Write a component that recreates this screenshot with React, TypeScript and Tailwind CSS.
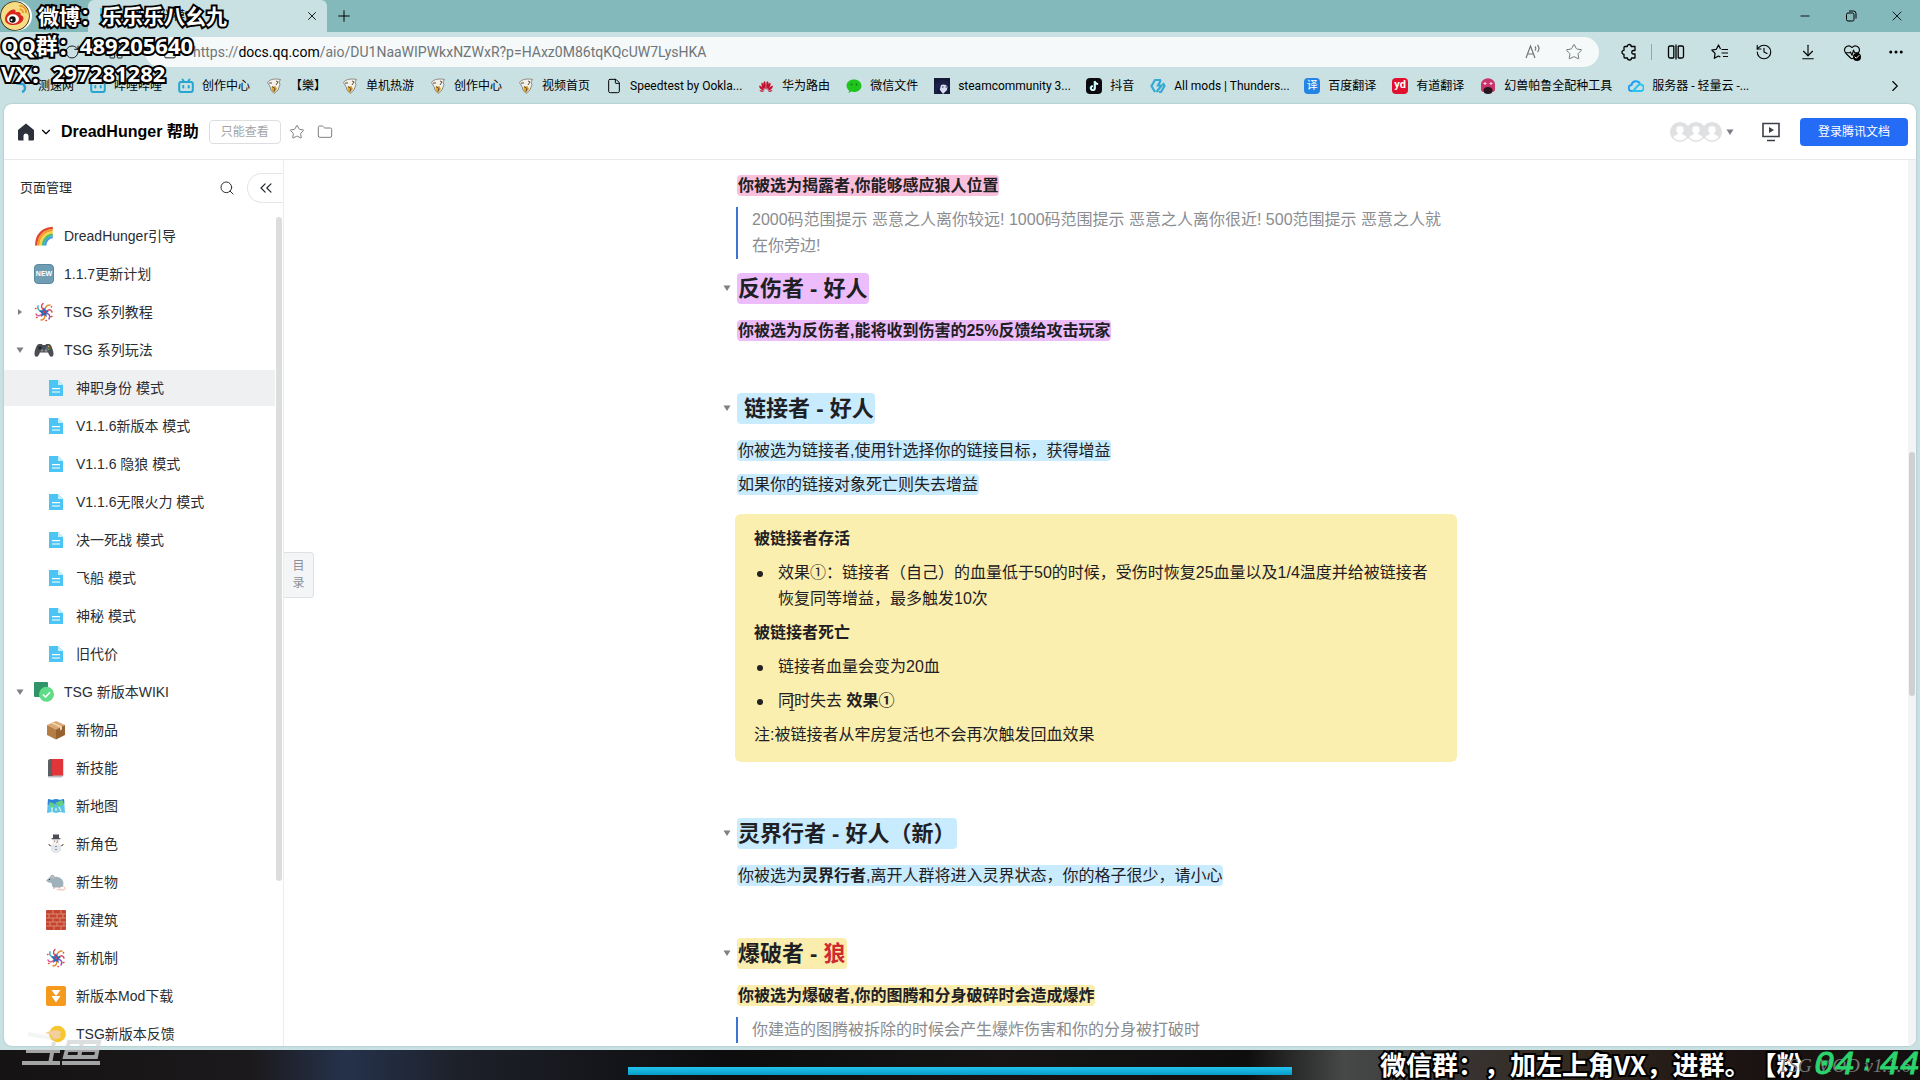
import type { ReactNode } from 'react';
import {
  ArrowDownToLine,
  Check,
  ChevronDown,
  ChevronRight,
  ChevronsLeft,
  Ellipsis,
  File,
  Folder,
  HeartPulse,
  History,
  LayoutGrid,
  Lock,
  Minus,
  Plus,
  RotateCw,
  Search,
  Star,
  X,
} from 'lucide-react';

interface Bookmark {
  label: string;
  icon: ReactNode;
  width?: string;
}

interface TreeItem {
  label: string;
  icon: ReactNode;
  child?: boolean;
  arrow?: 'open' | 'closed';
  active?: boolean;
}

const BiliIcon = () => (
  <svg viewBox="0 0 16 16" className="w-4 h-4" fill="none" stroke="#25a5cf" strokeWidth="2" strokeLinecap="round">
    <rect x="1.2" y="4" width="13.6" height="10" rx="2" />
    <path d="M4.5 1.5 6 3.5M11.5 1.5 10 3.5M5.3 8v1.6M10.7 8v1.6" />
  </svg>
);

const BirdIcon = () => (
  <svg viewBox="0 0 16 16" className="w-4 h-4">
    <path d="M1.500 4.500C4 1 9 .5 14.500 1.500L13 4l1 2.500-2 5.500-4 3.500L5 12l-1-3.500z" fill="#f4f1ea" stroke="#77716a" strokeWidth=".8" />
    <path d="m5.500 9 4-1 1.500 3-3 4-2.500-3z" fill="#e0a32c" />
    <path d="m6 8.500 3 2-1 3M10 3l2 1-2 3M3 5h3" fill="none" stroke="#5a4d3d" strokeWidth="1" />
  </svg>
);

const SpeedIcon = () => (
  <svg viewBox="0 0 16 16" className="w-4 h-4" fill="none" stroke="#2d9fd4" strokeWidth="2.4">
    <path d="M1 4c4 4 7 0 9 3s1 6-2 7M6 3c3-1 6-1 9 1" />
  </svg>
);

const HuaweiIcon = () => (
  <svg viewBox="0 0 16 16" className="w-4 h-4" fill="#c4102f">
    <path d="M7.6 11.5C5 8 4.500 4 6.800 3.200c1 .8 1.200 4 .8 8.300zM8.400 11.500C11 8 11.500 4 9.200 3.200c-1 .8-1.200 4-.8 8.300zM6.800 12C4.500 10 2.500 7 3.800 4.500 5.500 5.500 6.300 8.500 6.800 12zM9.200 12c2.300-2 4.300-5 3-7.500-1.700 1-2.500 4-3 7.500zM6.300 12.600C3.500 12 1 10.500 1.200 7.600c2.300.6 4 2.400 5.100 5zM9.700 12.600c2.800-.6 5.300-2.100 5.100-5-2.300.6-4 2.400-5.100 5zM6 13.200c-1.800.9-3.700.8-4.500-.9 1.500-.4 3-.1 4.500.9zM10 13.200c1.800.9 3.700.8 4.500-.9-1.500-.4-3-.1-4.500.9z" />
  </svg>
);

const WechatIcon = () => (
  <svg viewBox="0 0 16 16" className="w-4 h-4">
    <path d="M8 1.500c4.200 0 7.500 2.700 7.500 6.200S12.200 14 8 14c-1 0-2-.2-2.800-.4L2.500 15l.6-2.600C1.500 11.200.5 9.600.5 7.700.5 4.200 3.800 1.500 8 1.500z" fill="#1fc41f" />
    <circle cx="5.500" cy="6.500" r="1" fill="#0e7d14" />
    <circle cx="10.500" cy="6.500" r="1" fill="#0e7d14" />
  </svg>
);

const SteamIcon = () => (
  <svg viewBox="0 0 16 16" className="w-4 h-4">
    <rect width="16" height="16" fill="#15193a" />
    <path d="M5 5c3-3 8-2 9 1l-1 6-4 4-3-4z" fill="#d8dcf0" />
    <path d="M1 8c2-6 9-8 14-3l-1 4c-2-3-5-3-7-2l-1 4-2-2-1 6H1z" fill="#1b2147" />
    <path d="M8 9h1.500M11.500 9H13" stroke="#1b2147" strokeWidth="1.200" />
  </svg>
);

const TiktokIcon = () => (
  <svg viewBox="0 0 16 16" className="w-4 h-4">
    <rect width="16" height="16" rx="4" fill="#0b0b0f" />
    <path d="M8.500 3v7a2 2 0 1 1-2-2M8.500 3c.3 1.700 1.500 2.700 3.200 2.800" fill="none" stroke="#34dbe0" strokeWidth="1.800" />
    <path d="M9 3.300v7a2 2 0 1 1-2-2M9 3.300C9.300 5 10.500 6 12.200 6.100" fill="none" stroke="#fff" strokeWidth="1.500" />
  </svg>
);

const ThunderIcon = () => (
  <svg viewBox="0 0 16 16" className="w-4 h-4" fill="none" stroke="#35a9d6" strokeWidth="2.200">
    <path d="M11 2H5L1.500 8 5 14M11 2 8 7.500h3.500L6.500 14M13 5l1.500 3L11 14H9" />
  </svg>
);

const MonsterIcon = () => (
  <svg viewBox="0 0 16 16" className="w-4 h-4">
    <path d="M1 6a6 5 0 0 1 14 0v5a3 3 0 0 1-3 3H4a3 3 0 0 1-3-3z" fill="#c9356a" />
    <ellipse cx="8" cy="12.500" rx="4.500" ry="3.500" fill="#26151d" />
    <path d="M3.500 5.500h3M5 4v3M9.500 5.500h3M11 4v3" stroke="#ffd5e6" strokeWidth="1" />
  </svg>
);

const CloudIcon = () => (
  <svg viewBox="0 0 16 16" className="w-4 h-4" fill="none" strokeWidth="2">
    <path d="M6 13H4a3 3 0 0 1-.5-6A4.600 4.600 0 0 1 12 5.500" stroke="#1f9df5" />
    <path d="m5 13 5-5.500a3.300 3.300 0 1 1 2 5.500z" stroke="#29c3ee" />
  </svg>
);

const bookmarks: Bookmark[] = [
  { label: '测速网', icon: <SpeedIcon /> },
  { label: '哔哩哔哩', icon: <BiliIcon /> },
  { label: '创作中心', icon: <BiliIcon /> },
  { label: '【樂】', icon: <BirdIcon /> },
  { label: '单机热游', icon: <BirdIcon /> },
  { label: '创作中心', icon: <BirdIcon /> },
  { label: '视频首页', icon: <BirdIcon /> },
  { label: 'Speedtest by Ookla...', icon: <File className="w-4 h-4" strokeWidth={1.5} />, width: 'w-28' },
  { label: '华为路由', icon: <HuaweiIcon /> },
  { label: '微信文件', icon: <WechatIcon /> },
  { label: 'steamcommunity 3...', icon: <SteamIcon />, width: 'w-28' },
  { label: '抖音', icon: <TiktokIcon /> },
  { label: 'All mods | Thunders...', icon: <ThunderIcon />, width: 'w-[114px]' },
  {
    label: '百度翻译',
    icon: <span className="w-4 h-4 rounded-sm bg-[#2484e6] text-white text-[11px] leading-4 text-center">译</span>,
  },
  {
    label: '有道翻译',
    icon: <span className="w-4 h-4 rounded-sm bg-[#e0102e] text-white text-[11px] leading-[14px] font-bold text-center">yd</span>,
  },
  { label: '幻兽帕鲁全配种工具', icon: <MonsterIcon /> },
  { label: '服务器 - 轻量云 -...', icon: <CloudIcon /> },
];

const Rainbow = () => (
  <svg viewBox="0 0 20 20" className="w-5 h-5" fill="none" strokeWidth="2.400">
    <path d="M2.200 19.500C2.200 9 9 2.200 18.800 2" stroke="#e0452f" />
    <path d="M4.500 19.500C4.500 10.500 10.500 4.500 18.800 4.300" stroke="#f59a2b" />
    <path d="M6.800 19.500C6.800 12 12 6.800 18.800 6.600" stroke="#f7d548" />
    <path d="M9 19.500C9 13.500 13.500 9 18.800 8.800" stroke="#4fbb6b" />
    <path d="M11.200 19.500c0-4.700 3.300-8.200 7.600-8.400" stroke="#3b9be8" />
  </svg>
);

const NewBadge = () => (
  <span className="w-5 h-5 rounded-sm border border-[#5b8aa0] bg-[#6f9db3] text-white text-[7px] leading-[18px] font-bold text-center">
    NEW
  </span>
);

const Pinwheel = () => (
  <svg viewBox="0 0 20 20" className="w-5 h-5" fill="none" strokeWidth="1.500" strokeLinecap="round">
    <path d="M10 8C8 7 6 4 9 1.500" stroke="#d84a5b" />
    <path d="M11 9c0-4 2-6 5-6" stroke="#e58a2f" />
    <path d="M12 10c2-3 5-3 6 0" stroke="#d84a5b" />
    <path d="M11 11c4 0 6 3 4 6" stroke="#8e55c9" />
    <path d="M10 12c2 3 0 6-3 6" stroke="#e58a2f" />
    <path d="M9 11c-2 3-6 4-7 1" stroke="#e0609a" />
    <path d="M8 9C5 9 3 7 4 4" stroke="#3aa9c9" />
    <path d="m10 5 1.400 3.200L15 9l-2.800 2.400L13 15l-3-2-3 2 .8-3.600L5 9l3.600-.8z" fill="#3067b5" stroke="none" />
    <circle cx="10" cy="10" r="1.300" fill="#cf4050" stroke="none" />
    <path d="M17.500 4.500v.5M2.500 15.500h.5M17 14.500h1M1.500 6.500H2M12 18.500h.5" stroke="#e0503f" />
  </svg>
);

const Gamepad = () => (
  <svg viewBox="0 0 20 20" className="w-5 h-5">
    <path d="M5 4h3l.5 1h3L12 4h3c2 0 4 5 4.500 9 .3 4-2.500 5-4 2.500L14 12.500H6l-1.500 3C3 18 .2 17 .5 13 1 9 3 4 5 4z" fill="#4b4f54" />
    <circle cx="6" cy="8" r="1.800" fill="#23272b" />
    <circle cx="12" cy="10.500" r="1.500" fill="#85898d" />
    <circle cx="8" cy="10.500" r="1.300" fill="#85898d" />
    <circle cx="14.500" cy="6.500" r=".8" fill="#e8c63b" />
    <circle cx="16" cy="8" r=".8" fill="#e0483f" />
    <circle cx="14.500" cy="9.300" r=".8" fill="#52b558" />
    <circle cx="13" cy="8" r=".8" fill="#4a8fe0" />
  </svg>
);

const DocIcon = () => (
  <svg viewBox="0 0 14 16" className="w-[14px] h-4">
    <path d="M0 0h9l5 5v11H0z" fill="#4cc5f4" />
    <path d="M9 0v5h5z" fill="#c4effd" />
    <path d="M3 8.700h8M3 12h8" stroke="#fff" strokeWidth="1.200" />
  </svg>
);

const WikiIcon = () => (
  <svg viewBox="0 0 20 20" className="w-5 h-5">
    <rect width="14" height="15" rx="1" fill="#2f9468" />
    <circle cx="12.500" cy="12.300" r="7.500" fill="#5fdc86" />
    <path d="m9 12.500 2.500 2.500 4.500-4.700" fill="none" stroke="#fff" strokeWidth="1.600" />
  </svg>
);

const PackageBox = () => (
  <svg viewBox="0 0 20 20" className="w-5 h-5">
    <path d="m10 1 9 4-9 4.500L1 5z" fill="#d9a873" />
    <path d="M1 5v10l9 4.500v-10z" fill="#b57c45" />
    <path d="M19 5v10l-9 4.500v-10z" fill="#96602f" />
    <path d="m5 3.200 9 4.300v3l2-1V6.500L7 2.300z" fill="#eed3ad" />
  </svg>
);

const RedBook = () => (
  <svg viewBox="0 0 20 20" className="w-5 h-5">
    <path d="M3 1h14.500v17L15 19.500H2V2z" fill="#b9bdc1" />
    <path d="M2 2.500 4 1h3v17H2z" fill="#5d5f63" />
    <path d="M6 1h11v16.500H6z" fill="#e2353a" />
  </svg>
);

const MapIcon = () => (
  <svg viewBox="0 0 20 20" className="w-5 h-5">
    <path d="m2 3 4 1 4-1 4 1 4-1 1 14-5-1-4 1-4-1-5 1z" fill="#58c4ee" />
    <path d="m2 3 4 1 4-1 4 1 4-1 .3 4-7 2-5-2-4.600 2z" fill="#2f83d6" />
    <path d="m3 6 4 1 2 4-4 1zM9 7l7-3 2 4-5 3z" fill="#66cf7d" />
    <path d="M5 12h2M6 12v4M10 12v3M13 11l2 4" stroke="#e6f7d0" strokeWidth="1.200" />
  </svg>
);

const Snowman = () => (
  <svg viewBox="0 0 20 20" className="w-5 h-5">
    <path d="m3 11 4 2M17 11l-4 2M2.500 10l1 1M17.500 10l-1 1" stroke="#66564b" strokeWidth="1" />
    <circle cx="10" cy="14" r="5.300" fill="#e4e7ec" />
    <circle cx="10" cy="7.500" r="3.800" fill="#eef0f4" />
    <path d="M7 4V.5h6V4h1.300v1.200H5.700V4z" fill="#4b4d52" />
    <circle cx="8.700" cy="7" r=".5" fill="#333" />
    <circle cx="11.300" cy="7" r=".5" fill="#333" />
    <path d="m10 8 2.500.5L10 9z" fill="#e5793f" />
    <path d="M10 12v1M10 15v1" stroke="#444" />
  </svg>
);

const MouseIcon = () => (
  <svg viewBox="0 0 20 20" className="w-5 h-5">
    <path d="M16 14c4 1 4 4 1 4s-4-.5-6-.5" fill="none" stroke="#f0b49a" strokeWidth="1" />
    <path d="M0 8.500 4 5c1-3 4-3 4.500 0 4-1 9 2 9 6.500 0 3-2 4-4 4H7c-1-1-1-3-1.500-4.500C3.500 11 1 10 0 8.500z" fill="#9fb2bc" />
    <circle cx="7" cy="5" r="1.700" fill="#c9b6b8" />
    <circle cx="3.500" cy="7.500" r=".6" fill="#222" />
    <path d="M8 15v2M13 15l1 1.500" stroke="#e8a88f" strokeWidth="1.200" />
  </svg>
);

const BricksIcon = () => (
  <svg viewBox="0 0 20 20" className="w-5 h-5">
    <rect width="20" height="20" rx="1" fill="#c4442f" />
    <path d="M0 4h20M0 8h20M0 12h20M0 16h20M7 0v4M15 0v4M3 4v4M11 4v4M17 4v4M7 8v4M14 8v4M4 12v4M11 12v4M18 12v4M8 16v4M15 16v4" stroke="#e39a82" strokeWidth=".8" />
  </svg>
);

const DownloadIcon = () => (
  <svg viewBox="0 0 20 20" className="w-5 h-5">
    <rect width="20" height="20" rx="2" fill="#f59a1c" />
    <path d="M5.500 4h9L10 10zM5.500 10h9L10 16.500z" fill="#fff" />
  </svg>
);

const FeedbackIcon = () => (
  <svg viewBox="0 0 20 20" className="w-5 h-5">
    <circle cx="11.500" cy="10" r="8.300" fill="#f6c62c" />
    <path d="M0 8.500 8 6l6 1c2 1 1 3-1 3l2 2c-1 3-5 4-8 2L4 10 0 9.500z" fill="#f3cf9d" />
  </svg>
);

const treeItems: TreeItem[] = [
  { label: 'DreadHunger引导', icon: <Rainbow /> },
  { label: '1.1.7更新计划', icon: <NewBadge /> },
  { label: 'TSG 系列教程', icon: <Pinwheel />, arrow: 'closed' },
  { label: 'TSG 系列玩法', icon: <Gamepad />, arrow: 'open' },
  { label: '神职身份 模式', icon: <DocIcon />, child: true, active: true },
  { label: 'V1.1.6新版本 模式', icon: <DocIcon />, child: true },
  { label: 'V1.1.6 隐狼 模式', icon: <DocIcon />, child: true },
  { label: 'V1.1.6无限火力 模式', icon: <DocIcon />, child: true },
  { label: '决一死战 模式', icon: <DocIcon />, child: true },
  { label: '飞船 模式', icon: <DocIcon />, child: true },
  { label: '神秘 模式', icon: <DocIcon />, child: true },
  { label: '旧代价', icon: <DocIcon />, child: true },
  { label: 'TSG 新版本WIKI', icon: <WikiIcon />, arrow: 'open' },
  { label: '新物品', icon: <PackageBox />, child: true },
  { label: '新技能', icon: <RedBook />, child: true },
  { label: '新地图', icon: <MapIcon />, child: true },
  { label: '新角色', icon: <Snowman />, child: true },
  { label: '新生物', icon: <MouseIcon />, child: true },
  { label: '新建筑', icon: <BricksIcon />, child: true },
  { label: '新机制', icon: <Pinwheel />, child: true },
  { label: '新版本Mod下载', icon: <DownloadIcon />, child: true },
  { label: 'TSG新版本反馈', icon: <FeedbackIcon />, child: true },
];

function Caret({ closed = false }: { closed?: boolean }) {
  return (
    <svg viewBox="0 0 8 8" className="w-2 h-2 shrink-0" fill="#7d8085">
      <path d={closed ? 'M2 1v6l4-3z' : 'M.5 1.500h7L4 7z'} />
    </svg>
  );
}

function ToolButton({ label, children }: { label: string; children: ReactNode }) {
  return (
    <button aria-label={label} className="w-11 h-8 flex items-center justify-center shrink-0">
      {children}
    </button>
  );
}

function BrowserChrome() {
  return (
    <header className="font-['Roboto','Noto_Sans_CJK_SC',sans-serif] text-black shrink-0">
      <div className="h-8 bg-[#84b9bc] flex items-stretch">
        <div className="w-[88px] shrink-0" />
        <div className="w-[239px] bg-[#c9e1e3] rounded-t-md flex items-center gap-2 pl-3 pr-2">
          <DocIcon />
          <span className="flex-1 text-xs truncate">神职身份 模式</span>
          <button aria-label="关闭标签页">
            <X className="w-[14px] h-[14px]" strokeWidth={1.5} />
          </button>
        </div>
        <button aria-label="新建标签页" className="w-[34px] flex items-center justify-center">
          <Plus className="w-[18px] h-[18px]" strokeWidth={1.3} />
        </button>
        <div className="flex-1" />
        <button aria-label="最小化" className="w-[46px] flex items-center justify-center">
          <Minus className="w-[14px] h-[14px]" strokeWidth={1.5} />
        </button>
        <button aria-label="还原" className="w-[46px] flex items-center justify-center">
          <svg viewBox="0 0 12 12" className="w-3 h-3" fill="none" stroke="currentColor">
            <rect x="1.500" y="3" width="7.500" height="8" rx="1.500" />
            <path d="M4 1h4.500A2.500 2.500 0 0 1 11 3.500V8.500" />
          </svg>
        </button>
        <button aria-label="关闭" className="w-[46px] flex items-center justify-center">
          <X className="w-4 h-4" strokeWidth={1.3} />
        </button>
      </div>

      <div className="h-10 flex items-center pr-[2px]">
        <div className="w-[145px] flex items-center shrink-0 pl-16 gap-7">
          <RotateCw className="w-4 h-4" strokeWidth={1.3} />
          <LayoutGrid className="w-4 h-4" strokeWidth={1.3} />
        </div>
        <div className="flex-1 h-[30px] rounded-full bg-[#f5f9fa] flex items-center pl-[18px] pr-3">
          <Lock className="w-[14px] h-[14px] shrink-0 mr-4" strokeWidth={1.5} />
          <div className="flex-1 text-sm text-[#707577] whitespace-nowrap">
            https://<span className="text-black">docs.qq.com</span>/aio/DU1NaaWIPWkxNZWxR?p=HAxz0M86tqKQcUW7LysHKA
          </div>
          <button aria-label="大声朗读" className="w-10 flex justify-center text-[#707577]">
            <svg viewBox="0 0 18 18" className="w-[18px] h-[18px]" fill="none" stroke="currentColor" strokeWidth="1.200">
              <path d="m2 15 4.500-12L11 15M3.500 11h6M11 3.500c1 1 1 3 0 4M13.500 2c1.700 2 1.700 5 0 7" />
            </svg>
          </button>
          <button aria-label="收藏此页" className="w-[26px] ml-2 flex justify-center text-[#707577]">
            <Star className="w-[18px] h-[18px]" strokeWidth={1.3} />
          </button>
        </div>
        <div className="w-2" />
        <ToolButton label="扩展">
          <svg viewBox="0 0 18 18" className="w-[18px] h-[18px]" fill="none" stroke="currentColor" strokeWidth="1.300" strokeLinejoin="round">
            <path d="M5 3.500h2.200a2 2 0 0 1 4 0H15v4h-1.500a1.700 1.700 0 0 0 0 3.500H15v4h-3.500a2 2 0 0 1-4 0H5a1 1 0 0 1-1-1v-2.700a2 2 0 0 1 0-4V4.500a1 1 0 0 1 1-1z" />
          </svg>
        </ToolButton>
        <div className="w-px h-4 mr-[2px] bg-[#93a7a9]" />
        <ToolButton label="分屏">
          <svg viewBox="0 0 18 18" className="w-[18px] h-[18px]" fill="none" stroke="currentColor" strokeWidth="1.300">
            <path d="M6.800 3H3a1.500 1.500 0 0 0-1.500 1.500v9A1.500 1.500 0 0 0 3 15h3.800M11.200 3H15a1.500 1.500 0 0 1 1.500 1.500v9A1.500 1.500 0 0 1 15 15h-3.800M9 1.500v15M6.800 3v12M11.200 3v12" />
          </svg>
        </ToolButton>
        <ToolButton label="收藏夹">
          <svg viewBox="0 0 18 18" className="w-[18px] h-[18px]" fill="none" stroke="currentColor" strokeWidth="1.200" strokeLinejoin="round">
            <path d="M9.500 6 7.500 2 5.300 6.300.8 7l3.300 3.300-.8 5 4.200-2.300 1.800 1M10.500 6.500H17M10.500 10H17M12 13.500h5" />
          </svg>
        </ToolButton>
        <ToolButton label="历史记录">
          <History className="w-[18px] h-[18px]" strokeWidth={1.5} />
        </ToolButton>
        <ToolButton label="下载">
          <ArrowDownToLine className="w-[18px] h-[18px]" strokeWidth={1.5} />
        </ToolButton>
        <ToolButton label="浏览器概要">
          <span className="relative block">
            <HeartPulse className="w-[18px] h-[18px]" strokeWidth={1.5} />
            <span className="absolute right-0 bottom-0 w-2 h-2 rounded-full bg-black text-white flex items-center justify-center">
              <Check className="w-[6px] h-[6px]" strokeWidth={4} />
            </span>
          </span>
        </ToolButton>
        <ToolButton label="设置及其他">
          <Ellipsis className="w-[18px] h-[18px]" strokeWidth={2} />
        </ToolButton>
      </div>

      <nav className="h-8 flex items-center gap-4 pl-[14px] pr-4 pb-1 text-xs whitespace-nowrap">
        {bookmarks.map((b, i) => (
          <a key={i} href="#" className="flex items-center gap-2 shrink-0">
            {b.icon}
            <span className={b.width}>{b.label}</span>
          </a>
        ))}
        <button aria-label="更多书签" className="ml-auto">
          <ChevronRight className="w-[18px] h-[18px]" strokeWidth={1.5} />
        </button>
      </nav>
    </header>
  );
}

function DocHeader() {
  return (
    <div className="h-14 shrink-0 border-b border-[#e8e9eb] flex items-center pl-[13px] pr-2">
      <button aria-label="首页" className="flex items-center gap-1">
        <svg viewBox="0 0 18 18" className="w-[18px] h-[18px]" fill="#2b303a">
          <path d="M9 .5 17 7v9.500a1 1 0 0 1-1 1h-4.500V13a2.500 2.500 0 0 0-5 0v4.500H2a1 1 0 0 1-1-1V7z" />
        </svg>
        <ChevronDown className="w-[14px] h-[14px]" strokeWidth={2} />
      </button>
      <h1 className="ml-2 text-base font-bold text-black">DreadHunger 帮助</h1>
      <span className="ml-[10px] h-6 w-[72px] border border-[#dcdee0] rounded text-xs leading-[22px] text-center text-[#a3a6a9]">
        只能查看
      </span>
      <button aria-label="收藏" className="ml-2 text-[#7b7e82]">
        <Star className="w-4 h-4" strokeWidth={1.5} />
      </button>
      <button aria-label="移动到文件夹" className="ml-3 text-[#7b7e82]">
        <Folder className="w-4 h-4" strokeWidth={1.5} />
      </button>
      <div className="flex-1" />
      <div className="flex items-center">
        {[0, 1, 2].map((n) => (
          <svg key={n} viewBox="0 0 20 20" className="w-5 h-5 -mr-1">
            <circle cx="10" cy="10" r="10" fill="#dfe0e1" />
            <path d="M10 4c5 0 4 6 2 7.500 1 2 4 1.500 4.500 3.500a8 8 0 0 1-13 0C4 13 7 13.500 8 11.500 6 10 5 4 10 4z" fill="#fff" />
          </svg>
        ))}
        <span className="ml-2">
          <Caret />
        </span>
      </div>
      <button aria-label="演示" className="ml-7">
        <svg viewBox="0 0 18 20" className="w-[18px] h-5" fill="none" stroke="#3a3f48" strokeWidth="1.600">
          <path d="M1 1.500h16v13H1zM5 18.500h8" />
          <path d="M7 5v6l5-3z" fill="#3a3f48" stroke="none" />
        </svg>
      </button>
      <button className="ml-5 h-7 w-[108px] rounded bg-[#246bf6] text-white text-xs">登录腾讯文档</button>
    </div>
  );
}

function Sidebar() {
  return (
    <aside className="w-[280px] shrink-0 border-r border-[#ebecee] flex flex-col text-sm text-[#2a2d31]">
      <div className="h-14 shrink-0 flex items-center pl-4">
        <span className="text-[13px]">页面管理</span>
        <div className="flex-1" />
        <button aria-label="搜索" className="mr-3">
          <Search className="w-4 h-4" strokeWidth={1.5} />
        </button>
        <button
          aria-label="收起"
          className="w-9 h-[30px] border border-r-0 border-[#e3e5e7] rounded-l-full flex items-center justify-center"
        >
          <ChevronsLeft className="w-5 h-5" strokeWidth={1.5} />
        </button>
      </div>
      <div className="flex-1 min-h-0 flex">
        <ul className="flex-1 flex flex-col gap-[2px] pt-[2px] overflow-hidden">
          {treeItems.map((item) => (
            <li key={item.label} className="shrink-0">
              <a
                href="#"
                className={`h-9 flex items-center ${item.child ? 'pl-[42px]' : 'pl-3'} ${item.active ? 'bg-[#eff0f2]' : ''}`}
              >
                {!item.child && <span className="w-[18px]">{item.arrow && <Caret closed={item.arrow === 'closed'} />}</span>}
                <span className="w-5 flex justify-center shrink-0">{item.icon}</span>
                <span className="ml-[10px]">{item.label}</span>
              </a>
            </li>
          ))}
        </ul>
        <div className="w-2 shrink-0">
          <div className="w-[6px] h-[80%] mx-px mt-px rounded-full bg-[#dcdddd]" />
        </div>
      </div>
    </aside>
  );
}

function Mark({ color, children }: { color: string; children: ReactNode }) {
  return <mark className={`rounded px-px py-[2px] -ml-px text-inherit ${color}`}>{children}</mark>;
}

function Heading({ color, children }: { color: string; children: ReactNode }) {
  return (
    <h2 className="-ml-4 h-[34px] flex items-center text-[22px] font-bold whitespace-pre">
      <span className="w-4 pl-px flex">
        <Caret />
      </span>
      <span className={`-ml-px px-px py-[3px] leading-[25px] rounded ${color}`}>{children}</span>
    </h2>
  );
}

function Quote({ children }: { children: ReactNode }) {
  return <blockquote className="-ml-[2px] border-l-2 border-[#3c73d6] pl-[14px] text-[#8a8c8f]">{children}</blockquote>;
}

function Bullet({ children }: { children: ReactNode }) {
  return (
    <li className="flex">
      <span className="w-6 shrink-0 pl-[3px] pt-[11px]">
        <span className="block w-[6px] h-[6px] rounded-full bg-[#222]" />
      </span>
      <span>{children}</span>
    </li>
  );
}

function Article() {
  return (
    <article className="w-[716px] pt-[13px] text-base leading-[26px] text-[#1f2023]">
      <p className="font-bold">
        <Mark color="bg-[#f8c0dc]">你被选为揭露者,你能够感应狼人位置</Mark>
      </p>
      <div className="mt-2">
        <Quote>
          2000码范围提示 恶意之人离你较远! 1000码范围提示 恶意之人离你很近! 500范围提示 恶意之人就在你旁边!
        </Quote>
      </div>

      <div className="mt-3">
        <Heading color="bg-[#ecbdfa]">反伤者 - 好人</Heading>
      </div>
      <p className="mt-[13px] font-bold">
        <Mark color="bg-[#ecbdfa]">你被选为反伤者,能将收到伤害的25%反馈给攻击玩家</Mark>
      </p>

      <div className="mt-[47px]">
        <Heading color="bg-[#c8ebfd]"> 链接者 - 好人</Heading>
      </div>
      <p className="mt-[13px]">
        <Mark color="bg-[#c8ebfd]">你被选为链接者,使用针选择你的链接目标，获得增益</Mark>
      </p>
      <p className="mt-2">
        <Mark color="bg-[#c8ebfd]">如果你的链接对象死亡则失去增益</Mark>
      </p>

      <section className="mt-4 -mx-[3px] pl-[19px] pr-6 pt-3 pb-[14px] bg-[#faefae] rounded-md flex flex-col gap-2">
        <p className="font-bold">被链接者存活</p>
        <ul>
          <Bullet>
            效果①：链接者（自己）的血量低于50的时候，受伤时恢复25血量以及1/4温度并给被链接者恢复同等增益，最多触发10次
          </Bullet>
        </ul>
        <p className="font-bold">被链接者死亡</p>
        <ul className="flex flex-col gap-2">
          <Bullet>链接者血量会变为20血</Bullet>
          <Bullet>
            同时失去 <b>效果①</b>
          </Bullet>
        </ul>
        <p>注:被链接者从牢房复活也不会再次触发回血效果</p>
      </section>

      <div className="mt-[54px]">
        <Heading color="bg-[#c8ebfd]">灵界行者 - 好人（新）</Heading>
      </div>
      <p className="mt-[13px]">
        <Mark color="bg-[#c8ebfd]">
          你被选为<b>灵界行者</b>,离开人群将进入灵界状态，你的格子很少，请小心
        </Mark>
      </p>

      <div className="mt-[47px]">
        <Heading color="bg-[#faedae]">
          爆破者 - <span className="text-[#cf2a30]">狼</span>
        </Heading>
      </div>
      <p className="mt-[13px] font-bold">
        <Mark color="bg-[#faedae]">你被选为爆破者,你的图腾和分身破碎时会造成爆炸</Mark>
      </p>
      <div className="mt-2">
        <Quote>你建造的图腾被拆除的时候会产生爆炸伤害和你的分身被打破时</Quote>
      </div>
    </article>
  );
}

const outline = '[-webkit-text-stroke:4px_#000] [paint-order:stroke_fill]';

function StreamOverlay() {
  return (
    <div className={`absolute left-0 top-0 text-[22px] leading-7 font-bold text-white whitespace-nowrap font-['Noto_Sans','Noto_Sans_CJK_SC',sans-serif] ${outline}`}>
      <div className="h-[31px] flex items-center text-[21px]">
        <svg viewBox="0 0 32 32" className="w-8 h-8 mr-[6px]">
          <circle cx="17" cy="16" r="15" fill="#fff" />
          <circle cx="15" cy="16" r="14" fill="#f6dc83" stroke="#2c2410" strokeWidth="1.500" />
          <path d="M5 19c0-5 7-11 10-9 1 1 .5 2 .5 2.500 3-1 6-.5 5 2.500 3 1 4 3 2 6-4 6-17.500 5.500-17.500-2z" fill="#d9261c" />
          <ellipse cx="13" cy="19" rx="6" ry="4.700" fill="#fff" />
          <circle cx="12.500" cy="19.500" r="3.200" fill="#111" />
          <circle cx="11.500" cy="20" r="1" fill="#fff" />
          <path d="M19 6c4-1 8 3 7 7M19.500 9.500c2-.5 4 1.500 3.500 3.500" fill="none" stroke="#f09a28" strokeWidth="1.800" />
        </svg>
        微博：乐乐乐八幺九
      </div>
      <div className="pl-px">QQ群：489205640</div>
      <div className="pl-px">VX：297281282</div>
    </div>
  );
}

function BottomStrip() {
  return (
    <footer className="relative h-[30px] shrink-0 overflow-hidden bg-[linear-gradient(90deg,#151313_0%,#1b191b_13%,#25324b_18%,#1d2029_24%,#0d0d0e_38%,#171413_52%,#0f0e0e_65%,#464948_70%,#383433_76%,#33291e_82%,#1d1413_90%,#130f0f_100%)]">
      <div className="absolute left-[628px] right-[628px] bottom-[5px] h-2 bg-[linear-gradient(#22c4ee,#079cc8)]" />
      <div
        className={`absolute right-[118px] w-[424px] top-0 h-[30px] overflow-hidden whitespace-nowrap text-[26px] leading-[28px] font-bold text-white pl-[2px] [text-spacing-trim:space-all] font-['Noto_Sans_CJK_SC',sans-serif] ${outline}`}
      >
        微信群：，加左上角VX，进群。【粉
      </div>
      <div className="absolute right-[9px] top-1 font-['Liberation_Serif',serif] italic text-[19px] leading-6 text-[#75787a] whitespace-nowrap">
        TSG MOD v1.1.6
      </div>
      <div className="absolute right-0 top-0 flex justify-between w-[106px] font-['Liberation_Mono',monospace] italic text-[34px] leading-[30px] text-[#2bd46c] [-webkit-text-stroke:1px_#2bd46c]">
        <span>04</span>
        <span className="w-2 flex justify-center text-xl leading-[30px]">:</span>
        <span>44</span>
      </div>
    </footer>
  );
}

export default function App() {
  return (
    <div lang="zh-CN" className="relative h-screen flex flex-col overflow-hidden bg-[#c9e1e3]">
      <BrowserChrome />
      <div className="flex-1 min-h-0 ml-1 mr-1 mb-1 rounded-lg overflow-hidden bg-white flex flex-col shadow-[0_0_2px_#8fb0b2] font-['Liberation_Sans','Noto_Sans_CJK_SC',sans-serif]">
        <DocHeader />
        <div className="flex-1 min-h-0 flex">
          <Sidebar />
          <main className="relative flex-1 min-w-0 flex overflow-hidden">
            <button className="absolute left-0 top-[392px] w-[30px] h-[46px] border border-l-0 border-[#dfe2e5] rounded-r bg-[#f3f5f7] text-xs leading-[17px] text-[#8d9094] flex items-center justify-center">
              <span className="w-3">目录</span>
            </button>
            <div className="flex-1 min-w-0 flex justify-center">
              <Article />
            </div>
            <div className="w-2 shrink-0 bg-[#f4f4f4] flex flex-col items-center">
              <div className="basis-[33%]" />
              <div className="w-[6px] basis-[27.500%] rounded-full bg-[#cfd0d0]" />
            </div>
          </main>
        </div>
      </div>
      <BottomStrip />
      <StreamOverlay />
      {/* text cursor over the callout */}
      <svg viewBox="0 0 8 16" className="absolute left-[788px] top-[695px] w-2 h-4" fill="none" stroke="#333">
        <path d="M1.500 .5h5M4 .5v15M1.500 15.500h5" />
      </svg>
      {/* stream watermark */}
      <svg viewBox="0 0 80 36" className="absolute left-[22px] bottom-[14px] w-20 h-9" fill="none" stroke="#d2d4d5" strokeWidth="4" opacity=".75">
        <path d="M6 4 34 9" opacity=".3" />
        <path d="M4 21h34M0 33h38M32 12l-4 22" />
        <path d="M47 12h30l-3 15H43zM45 20h29M60 12l-3 15M40 33h38" />
      </svg>
    </div>
  );
}
